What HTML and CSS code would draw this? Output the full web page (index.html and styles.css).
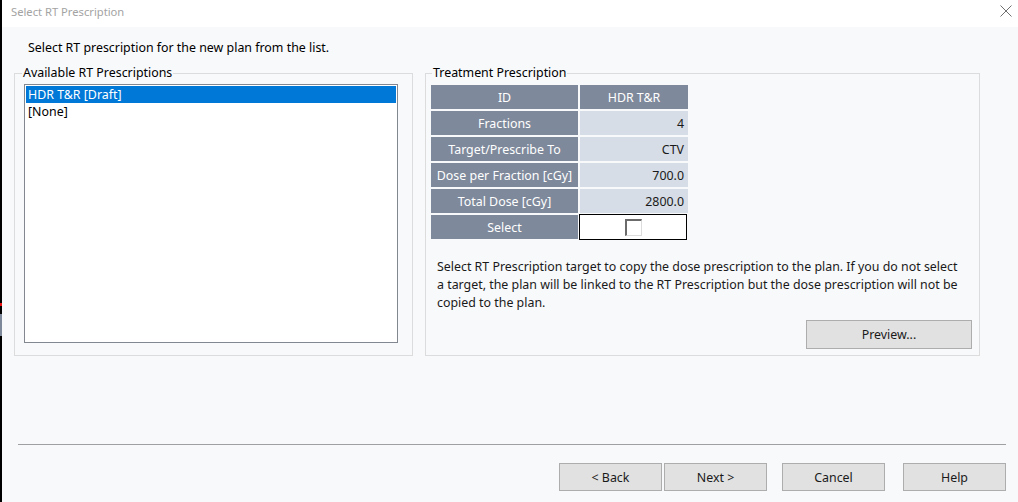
FILE: index.html
```html
<!DOCTYPE html>
<html>
<head>
<meta charset="utf-8">
<link rel="stylesheet" href="styles.css">
</head>
<body>
<div class="window">
  <span class="edge-mark edge-red"></span>
  <span class="edge-mark edge-blue"></span>
  <div class="titlebar">
    <span class="title">Select RT Prescription</span>
    <svg class="close" width="12" height="12" viewBox="0 0 12 12"><path d="M0.5 0.5 L11.5 11.5 M11.5 0.5 L0.5 11.5" stroke="#6f6f6f" stroke-width="1" fill="none"/></svg>
  </div>
  <div class="content">
    <p class="intro">Select RT prescription for the new plan from the list.</p>
    <div class="groups">
      <fieldset class="group group-left">
        <legend>Available RT Prescriptions</legend>
        <ul class="listbox">
          <li class="item selected">HDR T&amp;R [Draft]</li>
          <li class="item">[None]</li>
        </ul>
      </fieldset>
      <fieldset class="group group-right">
        <legend>Treatment Prescription</legend>
        <div class="rx-table">
          <div class="cell head">ID</div>
          <div class="cell head">HDR T&amp;R</div>
          <div class="cell head">Fractions</div>
          <div class="cell val">4</div>
          <div class="cell head">Target/Prescribe To</div>
          <div class="cell val">CTV</div>
          <div class="cell head">Dose per Fraction [cGy]</div>
          <div class="cell val">700.0</div>
          <div class="cell head">Total Dose [cGy]</div>
          <div class="cell val">2800.0</div>
          <div class="cell head">Select</div>
          <div class="cell check-cell"><span class="checkbox"></span></div>
        </div>
        <p class="note">Select RT Prescription target to copy the dose prescription to the plan. If you do not select a target, the plan will be linked to the RT Prescription but the dose prescription will not be copied to the plan.</p>
        <div class="preview-row"><button class="btn preview">Preview...</button></div>
      </fieldset>
    </div>
    <div class="separator"></div>
    <div class="actions">
      <button class="btn">&lt; Back</button>
      <button class="btn next">Next &gt;</button>
      <button class="btn cancel">Cancel</button>
      <button class="btn help">Help</button>
    </div>
  </div>
</div>
</body>
</html>
```

FILE: styles.css
```css
* { box-sizing: border-box; }
html, body { margin: 0; padding: 0; }
body {
  width: 1018px;
  height: 502px;
  overflow: hidden;
  font-family: "Noto Sans", "Open Sans", sans-serif;
  font-size: 12.4px;
  color: #000;
}
.window {
  position: relative;
  width: 1018px;
  height: 502px;
  border-left: 2px solid #000;
  display: flex;
  flex-direction: column;
  background: #f8f9fb;
}
.edge-mark {
  position: absolute;
  left: -2px;
  width: 2px;
}
.edge-red { top: 303px; height: 3px; background: #e81010; }
.edge-blue { top: 314px; height: 22px; background: #7d889b; }
.titlebar {
  height: 27px;
  background: #fff;
  display: flex;
  justify-content: space-between;
  align-items: flex-start;
  padding: 4px 6px 0 9px;
}
.title {
  color: #a3a3a3;
  font-size: 11.2px;
  line-height: 16px;
}
.close { margin-top: 1px; }
.content {
  flex: 1;
  padding: 0 12px;
  display: flex;
  flex-direction: column;
}
.intro {
  margin: 13px 0 0 14px;
  line-height: 16px;
}
.groups {
  display: flex;
  gap: 12px;
  margin-top: 9px;
}
.group {
  margin: 0;
  border: 1px solid #dcdcdc;
  height: 291px;
  min-width: 0;
}
.group legend {
  line-height: 16px;
  padding: 0 1px;
}
.group-left {
  width: 399px;
  padding: 3px 14px 12px 9px;
}
.group-left legend { margin-left: -2px; }
.group-right {
  width: 555px;
  padding: 3px 7px 6px 5px;
  display: flex;
  flex-direction: column;
}
.group-right legend { margin-left: 1px; }
.listbox {
  list-style: none;
  margin: 0;
  padding: 1px;
  height: 259px;
  background: #fff;
  border: 1px solid #828790;
}
.item {
  line-height: 17px;
  padding-left: 2px;
}
.item.selected {
  background: #0078d7;
  color: #fff;
}
.rx-table {
  display: grid;
  grid-template-columns: 147px 108px;
  grid-auto-rows: 24px;
  column-gap: 2px;
  row-gap: 2px;
  padding: 1px 0;
  width: 257px;
}
.cell {
  display: flex;
  align-items: center;
  padding: 0 4px;
  white-space: nowrap;
}
.cell.head {
  background: #7e899b;
  color: #fff;
  justify-content: center;
}
.cell.val {
  background: #d6dde6;
  color: #1a1a1a;
  justify-content: flex-end;
}
.check-cell {
  background: #fff;
  border: 1px solid #000;
  justify-content: center;
  margin: -1px 0 -1px -1px;
  width: 108px;
}
.checkbox {
  width: 17px;
  height: 17px;
  border-top: 2px solid #6b6b6b;
  border-left: 2px solid #6b6b6b;
  border-right: 1px solid #dcdcdc;
  border-bottom: 1px solid #dcdcdc;
  background: #fff;
}
.note {
  margin: 18px 9px 0 6px;
  line-height: 18px;
  color: #1a1a1a;
}
.preview-row {
  display: flex;
  justify-content: flex-end;
  margin-top: auto;
}
.btn {
  font-family: inherit;
  font-size: 12.4px;
  color: #1a1a1a;
  background: #e1e1e1;
  border: 1px solid #adadad;
  border-radius: 0;
  width: 103px;
  height: 28px;
  padding: 0;
}
.btn.preview {
  width: 166px;
  height: 29px;
}
.separator {
  height: 1px;
  background: #a0a0a0;
  margin: 88px 0 0 4px;
}
.actions {
  display: flex;
  justify-content: flex-end;
  margin-top: 18px;
}
.btn.next { margin-left: 2px; }
.btn.cancel { margin-left: 15px; }
.btn.help { margin-left: 18px; }
```
